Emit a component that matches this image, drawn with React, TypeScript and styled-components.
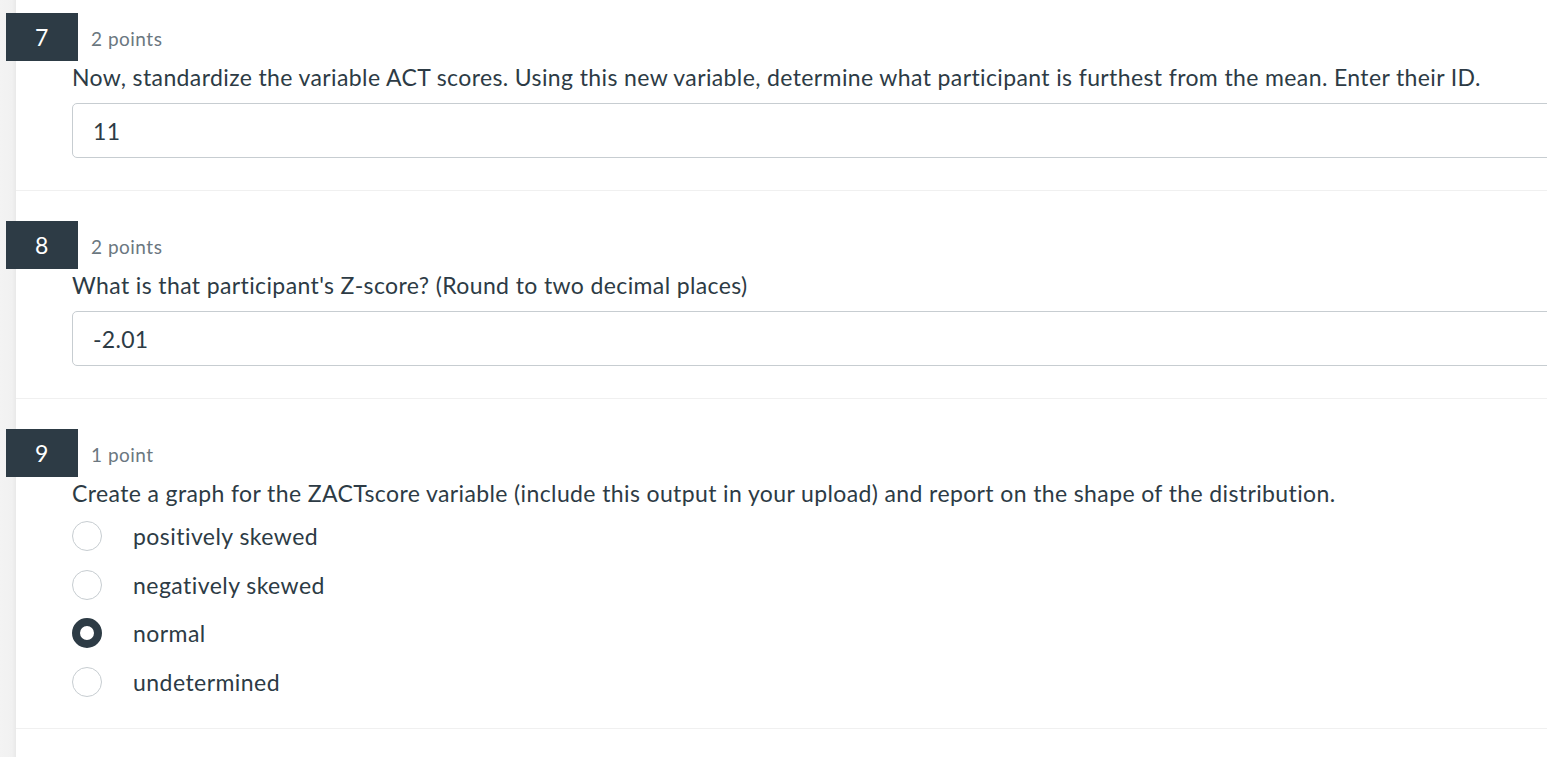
import React from "react";
import styled, { createGlobalStyle } from "styled-components";

const Global = createGlobalStyle`
  html, body { margin: 0; padding: 0; background: #ffffff; }
  body { font-family: Lato, "Noto Sans", "Liberation Sans", sans-serif; color: #2d3b45; overflow: hidden; }
`;

const Page = styled.div`
  display: flex;
  width: 1547px;
  height: 757px;
  overflow: hidden;
  background: #ffffff;
`;

const Strip = styled.div`
  flex: 0 0 16px;
  background: linear-gradient(to right, #f3f3f3 0px, #f1f1f1 12px, #e9e9e9 16px);
`;

const Main = styled.div`
  flex: 1;
  min-width: 0;
`;

const Question = styled.section<{ $first?: boolean }>`
  padding: ${(p) => (p.$first ? "13px" : "30px")} 0 24px 0;
  border-bottom: 1px solid #f0f0f0;
`;

const Header = styled.div`
  display: flex;
  align-items: center;
  height: 48px;
  gap: 13px;
`;

const Badge = styled.div`
  width: 72px;
  height: 48px;
  margin-left: -10px;
  background: #2d3b45;
  color: #ffffff;
  font-size: 23px;
  letter-spacing: 0.5px;
  display: flex;
  align-items: center;
  justify-content: center;
`;

const Points = styled.span`
  font-size: 19px;
  letter-spacing: 0.5px;
  color: #6b7780;
  padding-top: 2px;
`;

const Body = styled.div`
  padding-left: 56px;
`;

const Prompt = styled.div`
  font-size: 23px;
  letter-spacing: 0.38px;
  line-height: 31px;
  margin-top: 1px;
`;

const Answer = styled.div`
  width: 1500px;
  height: 55px;
  box-sizing: border-box;
  margin-top: 10px;
  margin-bottom: 8px;
  border: 1px solid #c7cdd1;
  border-radius: 5px;
  padding-left: 20px;
  display: flex;
  align-items: center;
  font-size: 23px;
  letter-spacing: 0.3px;
  color: #2d3b45;
`;

const Options = styled.div`
  display: flex;
  flex-direction: column;
  gap: 8.6px;
  margin-top: 7px;
  margin-bottom: 2px;
`;

const Option = styled.label`
  display: flex;
  align-items: center;
  height: 40px;
  gap: 31px;
  font-size: 23px;
  letter-spacing: 0.45px;
`;

const Radio = styled.span<{ $checked?: boolean }>`
  width: 30px;
  height: 30px;
  box-sizing: border-box;
  border-radius: 50%;
  border: ${(p) => (p.$checked ? "8.5px solid #2d3b45" : "1px solid #c7cdd1")};
  background: #ffffff;
  flex: 0 0 30px;
`;

const options = ["positively skewed", "negatively skewed", "normal", "undetermined"];

export default function App() {
  return (
    <Page>
      <Global />
      <Strip />
      <Main>
        <Question $first>
          <Header>
            <Badge>7</Badge>
            <Points>2 points</Points>
          </Header>
          <Body>
            <Prompt>
              Now, standardize the variable ACT scores. Using this new variable, determine what participant is furthest from the mean. Enter their ID.
            </Prompt>
            <Answer>11</Answer>
          </Body>
        </Question>
        <Question>
          <Header>
            <Badge>8</Badge>
            <Points>2 points</Points>
          </Header>
          <Body>
            <Prompt>What is that participant's Z-score? (Round to two decimal places)</Prompt>
            <Answer>-2.01</Answer>
          </Body>
        </Question>
        <Question>
          <Header>
            <Badge>9</Badge>
            <Points>1 point</Points>
          </Header>
          <Body>
            <Prompt>
              Create a graph for the ZACTscore variable (include this output in your upload) and report on the shape of the distribution.
            </Prompt>
            <Options>
              {options.map((o) => (
                <Option key={o}>
                  <Radio $checked={o === "normal"} />
                  {o}
                </Option>
              ))}
            </Options>
          </Body>
        </Question>
      </Main>
    </Page>
  );
}
